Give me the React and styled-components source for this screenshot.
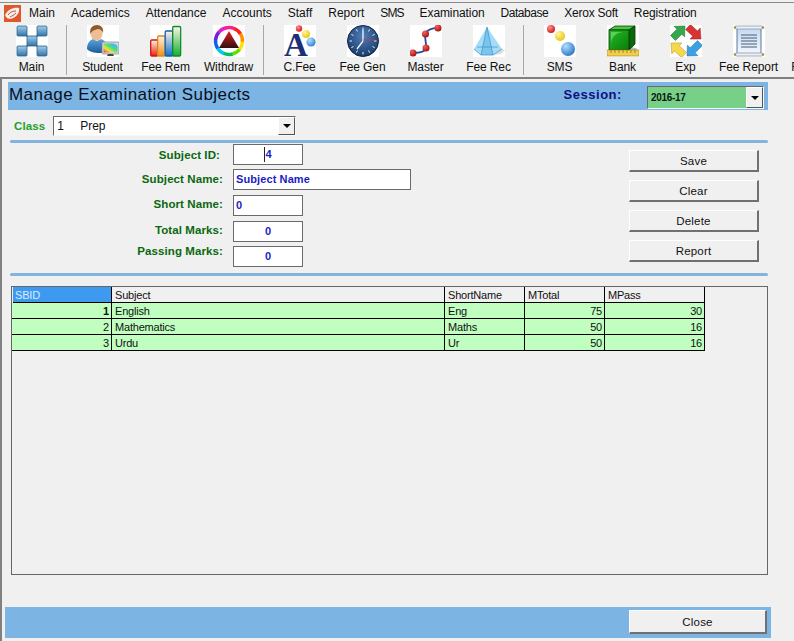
import styled, { createGlobalStyle } from 'styled-components';

const GlobalStyle = createGlobalStyle`
  html, body {
    margin: 0;
    padding: 0;
    background: #f0f0f0;
  }
  * {
    box-sizing: border-box;
  }
`;

const ball = (id, light, dark) => (
  <radialGradient id={id} cx="0.35" cy="0.3" r="0.8">
    <stop offset="0" stopColor={light} />
    <stop offset="1" stopColor={dark} />
  </radialGradient>
);

const MainIcon = () => (
  <svg viewBox="0 0 32 32" width="32" height="32">
    <defs>
      <linearGradient id="mainTile" x1="0" y1="0" x2="0" y2="1">
        <stop offset="0" stopColor="#a4cceb" />
        <stop offset="1" stopColor="#2f76a8" />
      </linearGradient>
    </defs>
    <rect width="32" height="32" fill="#fff" />
    <path d="M6 6L26 26M26 6L6 26" stroke="#2a5f88" strokeWidth="1.6" />
    {[[1, 1], [21, 1], [11, 11], [1, 21], [21, 21]].map(([x, y]) => (
      <rect key={`${x}-${y}`} x={x} y={y} width="10" height="10" rx="1" fill="url(#mainTile)" stroke="#2b6288" strokeWidth="0.8" />
    ))}
  </svg>
);

const StudentIcon = () => (
  <svg viewBox="0 0 32 32" width="32" height="32">
    <defs>
      <linearGradient id="rainbow" x1="0" y1="1" x2="1" y2="0">
        <stop offset="0" stopColor="#f03040" />
        <stop offset="0.3" stopColor="#f0e040" />
        <stop offset="0.55" stopColor="#50e070" />
        <stop offset="0.8" stopColor="#40b8f0" />
        <stop offset="1" stopColor="#e8e8ff" />
      </linearGradient>
      <linearGradient id="shirt" x1="0" y1="0" x2="0" y2="1">
        <stop offset="0" stopColor="#5aa4dc" />
        <stop offset="1" stopColor="#1c5c9c" />
      </linearGradient>
    </defs>
    <rect width="32" height="32" fill="#fff" />
    <path d="M0 24c0-6 3-9 6-10l4 2 4-2c3 1 5 3 5 6v7c-5 2-16 1-19-3z" fill="url(#shirt)" />
    <ellipse cx="9.5" cy="8.5" rx="6" ry="7" fill="#f0bc94" />
    <path d="M3.5 9C2 3 6 0 10 0s7 3 6 8c-1-3-3-4-5-4-3 1-6 1-7.500 5z" fill="#8f5a2a" />
    <rect x="15" y="17" width="17" height="12" rx="1" fill="#d4d8dc" stroke="#80868c" strokeWidth="0.7" />
    <rect x="16.500" y="18.500" width="14" height="9" fill="url(#rainbow)" />
    <path d="M21 29h5l1 2h-7z" fill="#444" />
  </svg>
);

const barFill = (id, color) => (
  <linearGradient id={id} x1="0" y1="0" x2="0" y2="1">
    <stop offset="0" stopColor="#fff4e8" />
    <stop offset="1" stopColor={color} />
  </linearGradient>
);

const FeeRemIcon = () => (
  <svg viewBox="0 0 32 32" width="32" height="32">
    <defs>
      {barFill('barRed', '#e82010')}
      {barFill('barOrange', '#f09010')}
      {barFill('barBlue', '#1070d0')}
      {barFill('barGreen', '#10b030')}
    </defs>
    <rect width="32" height="32" fill="#fff" />
    <rect x="0.700" y="15" width="7" height="16" rx="1" fill="url(#barRed)" stroke="#c81810" strokeWidth="1.300" />
    <rect x="7.700" y="11" width="7.500" height="20" rx="1" fill="url(#barOrange)" stroke="#e08818" strokeWidth="1.300" />
    <rect x="15.200" y="6" width="7.500" height="25" rx="1" fill="url(#barBlue)" stroke="#1060b0" strokeWidth="1.300" />
    <rect x="22.700" y="1.500" width="8" height="29.500" rx="1" fill="url(#barGreen)" stroke="#0c8a28" strokeWidth="1.300" />
  </svg>
);

const wheelColors = ['#ff2020', '#ff9000', '#ffe000', '#60e000', '#00c060', '#00c8e8', '#1060f0', '#7020e0', '#e020d0', '#ff2080'];

const WithdrawIcon = () => (
  <svg viewBox="0 0 32 32" width="32" height="32">
    <defs>
      <linearGradient id="triFill" x1="0" y1="0" x2="0" y2="1">
        <stop offset="0" stopColor="#e02020" />
        <stop offset="1" stopColor="#301010" />
      </linearGradient>
    </defs>
    <rect width="32" height="32" fill="#fff" />
    {wheelColors.map((color, i) => {
      const a0 = (i / 10) * Math.PI * 2 - 1.2;
      const a1 = ((i + 1.1) / 10) * Math.PI * 2 - 1.2;
      return (
        <path
          key={color}
          d={`M${16 + 13.5 * Math.cos(a0)} ${16 + 13.5 * Math.sin(a0)}A13.5 13.5 0 0 1 ${16 + 13.5 * Math.cos(a1)} ${16 + 13.5 * Math.sin(a1)}`}
          fill="none"
          stroke={color}
          strokeWidth="3.4"
        />
      );
    })}
    <path d="M16 6L26 23H6z" fill="url(#triFill)" />
  </svg>
);

const CFeeIcon = () => (
  <svg viewBox="0 0 32 32" width="32" height="32">
    <defs>
      {ball('cfRed', '#ff9090', '#d01010')}
      {ball('cfYellow', '#fff8a0', '#e8c000')}
      {ball('cfBlue', '#b0e0ff', '#2878d0')}
    </defs>
    <rect width="32" height="32" fill="#fff" />
    <text x="0" y="31" fontFamily="'Liberation Serif', serif" fontWeight="700" fontSize="33" fill="#1c2f78">A</text>
    <circle cx="15" cy="3.500" r="3.200" fill="url(#cfRed)" />
    <circle cx="22" cy="9" r="4" fill="url(#cfYellow)" />
    <circle cx="27" cy="17" r="4.600" fill="url(#cfBlue)" />
  </svg>
);

const FeeGenIcon = () => (
  <svg viewBox="0 0 32 32" width="32" height="32">
    <defs>
      <radialGradient id="clockFace" cx="0.5" cy="0.35" r="0.75">
        <stop offset="0" stopColor="#4f7fb8" />
        <stop offset="1" stopColor="#12305e" />
      </radialGradient>
    </defs>
    <rect width="32" height="32" fill="#fff" />
    <circle cx="16" cy="16" r="15.500" fill="url(#clockFace)" stroke="#0f2747" />
    {Array.from({ length: 12 }).map((_, i) => {
      const a = (i / 12) * Math.PI * 2;
      return (
        <line
          key={i}
          x1={16 + 11 * Math.cos(a)}
          y1={16 + 11 * Math.sin(a)}
          x2={16 + 13.5 * Math.cos(a)}
          y2={16 + 13.5 * Math.sin(a)}
          stroke="#e8f0f8"
          strokeWidth="1"
        />
      );
    })}
    <path d="M16 16V5M16 16L10 24" stroke="#f4f8fc" strokeWidth="1.300" />
    <path d="M16 15h12" stroke="#e03030" strokeWidth="0.800" />
  </svg>
);

const MasterIcon = () => (
  <svg viewBox="0 0 32 32" width="32" height="32">
    <defs>{ball('msRed', '#f86060', '#9c0808')}</defs>
    <rect width="32" height="32" fill="#fff" />
    <path d="M3 28C8 28 15 27 16 23C17 18 14 14 15.500 9C17 5 22 3 28 3" fill="none" stroke="#1c4fa0" strokeWidth="1.800" />
    {[[3, 28], [16, 23], [15.5, 9], [28, 3]].map(([x, y]) => (
      <circle key={x + y} cx={x} cy={y} r="3.500" fill="url(#msRed)" />
    ))}
  </svg>
);

const FeeRecIcon = () => (
  <svg viewBox="0 0 32 32" width="32" height="32">
    <rect width="32" height="32" fill="#fff" />
    <path d="M20 30l9-6 3 1-4 4z" fill="#dcdcdc" />
    <path d="M14 2L1 24l7 6h12l9-6z" fill="#a8dcf6" />
    <path d="M14 2L8 30h12z" fill="#7cc4ec" />
    <path d="M14 2L8 30M14 2L20 30M1 24l7 6h12l9-6M4 22h21" stroke="#3c9cd8" strokeWidth="0.800" fill="none" />
  </svg>
);

const SmsIcon = () => (
  <svg viewBox="0 0 32 32" width="32" height="32">
    <defs>
      {ball('smsRed', '#ff9090', '#c81010')}
      {ball('smsYellow', '#fff8a0', '#e8c000')}
      {ball('smsBlue', '#b0e0ff', '#2070c0')}
    </defs>
    <rect width="32" height="32" fill="#fff" />
    <circle cx="7" cy="4" r="4" fill="url(#smsRed)" />
    <circle cx="16" cy="11" r="5" fill="url(#smsYellow)" />
    <circle cx="24" cy="24" r="7" fill="url(#smsBlue)" />
  </svg>
);

const BankIcon = () => (
  <svg viewBox="0 0 32 32" width="32" height="32">
    <defs>
      <linearGradient id="cubeFront" x1="0" y1="0" x2="1" y2="1">
        <stop offset="0" stopColor="#30b030" />
        <stop offset="0.45" stopColor="#18a018" />
        <stop offset="1" stopColor="#0c7a0c" />
      </linearGradient>
    </defs>
    <rect width="32" height="32" fill="#fff" />
    <path d="M25 22l6 2-2 1h-8z" fill="#b8b8b8" />
    <path d="M8 1h20l-6 4H2z" fill="#48c840" stroke="#063806" strokeWidth="0.800" />
    <path d="M28 1v18l-6 6V5z" fill="#0a6a0a" stroke="#063806" strokeWidth="0.800" />
    <rect x="2" y="5" width="20" height="20" fill="url(#cubeFront)" stroke="#063806" strokeWidth="0.800" />
    <path d="M4 20C4 12 8 8 16 7H4z" fill="#70e070" opacity="0.7" />
    <rect x="0" y="25" width="32" height="6" fill="#f0cf50" stroke="#a08820" strokeWidth="0.600" />
    <path d="M4 25v3M8 25v3M12 25v3M16 25v3M20 25v3M24 25v3M28 25v3" stroke="#806810" strokeWidth="0.700" />
  </svg>
);

// arrow polygon going from tail to tip, for the four swap arrows
const arrowPoints = (x0, y0, x1, y1) => {
  const len = Math.hypot(x1 - x0, y1 - y0);
  const ux = (x1 - x0) / len;
  const uy = (y1 - y0) / len;
  const nx = -uy;
  const ny = ux;
  const bx = x1 - ux * 8;
  const by = y1 - uy * 8;
  const pts = [
    [x0 + nx * 3.5, y0 + ny * 3.5],
    [bx + nx * 3.5, by + ny * 3.5],
    [bx + nx * 7.5, by + ny * 7.5],
    [x1, y1],
    [bx - nx * 7.5, by - ny * 7.5],
    [bx - nx * 3.5, by - ny * 3.5],
    [x0 - nx * 3.5, y0 - ny * 3.5],
  ];
  return pts.map((p) => p.join(',')).join(' ');
};

const ExpIcon = () => (
  <svg viewBox="0 0 32 32" width="32" height="32">
    <rect width="32" height="32" fill="#fff" />
    <polygon points={arrowPoints(3, 13, 15, 1)} fill="#34a84c" stroke="#1c7030" strokeWidth="0.500" />
    <polygon points={arrowPoints(18, 2, 31, 14)} fill="#d83434" stroke="#902020" strokeWidth="0.500" />
    <polygon points={arrowPoints(14, 30, 1, 18)} fill="#f6d84c" stroke="#b09020" strokeWidth="0.500" />
    <polygon points={arrowPoints(30, 18, 17, 31)} fill="#3ca0e4" stroke="#2070a8" strokeWidth="0.500" />
  </svg>
);

const FeeReportIcon = () => (
  <svg viewBox="0 0 32 32" width="32" height="32">
    <defs>
      <linearGradient id="scrollBody" x1="0" y1="0" x2="0" y2="1">
        <stop offset="0" stopColor="#c4d8f0" />
        <stop offset="1" stopColor="#f4f8fc" />
      </linearGradient>
    </defs>
    <rect width="32" height="32" fill="#fff" />
    <rect x="4" y="3" width="24" height="26" fill="url(#scrollBody)" stroke="#4c6c98" strokeWidth="0.900" />
    <rect x="2" y="1" width="28" height="3" rx="1.500" fill="#eef2f8" stroke="#8898a8" strokeWidth="0.800" />
    <rect x="2" y="28" width="28" height="3" rx="1.500" fill="#eef2f8" stroke="#8898a8" strokeWidth="0.800" />
    <path d="M8 10h16M8 13h16M8 16h16M8 19h16M8 22h16" stroke="#4a5c78" strokeWidth="1" />
    <circle cx="2" cy="2.500" r="1.300" fill="#a89048" />
    <circle cx="30" cy="2.500" r="1.300" fill="#a89048" />
    <circle cx="2" cy="29.500" r="1.300" fill="#a89048" />
    <circle cx="30" cy="29.500" r="1.300" fill="#a89048" />
  </svg>
);

const AppLogo = () => (
  <svg viewBox="0 0 17 17" width="17" height="17">
    <rect width="17" height="17" fill="#e2562c" />
    <path d="M1 10C4 4 10 2 15 3c1 4-2 9-8 11-3 0-5-1-6-4z" fill="#f8efe8" />
    <path d="M4 10c2-3 5-4 8-4M6 12c2-1 4-2 6-4" fill="none" stroke="#b8503c" strokeWidth="1" />
  </svg>
);

const menuItems = [
  { label: 'Main' },
  { label: 'Academics' },
  { label: 'Attendance' },
  { label: 'Accounts' },
  { label: 'Staff' },
  { label: 'Report' },
  { label: 'SMS', tight: 0.9 },
  { label: 'Examination', tight: 0.1 },
  { label: 'Database', tight: 0.45 },
  { label: 'Xerox Soft', tight: 0.25 },
  { label: 'Registration', tight: 0.1 },
];

const toolGroups = [
  [{ label: 'Main', Icon: MainIcon }],
  [
    { label: 'Student', Icon: StudentIcon },
    { label: 'Fee Rem', Icon: FeeRemIcon },
    { label: 'Withdraw', Icon: WithdrawIcon },
  ],
  [
    { label: 'C.Fee', Icon: CFeeIcon },
    { label: 'Fee Gen', Icon: FeeGenIcon },
    { label: 'Master', Icon: MasterIcon },
    { label: 'Fee Rec', Icon: FeeRecIcon },
  ],
  [
    { label: 'SMS', Icon: SmsIcon },
    { label: 'Bank', Icon: BankIcon },
    { label: 'Exp', Icon: ExpIcon },
    { label: 'Fee Report', Icon: FeeReportIcon },
    { label: 'Fee Bal', Icon: null },
  ],
];

const subjects = [
  { id: 1, name: 'English', short: 'Eng', total: 75, pass: 30 },
  { id: 2, name: 'Mathematics', short: 'Maths', total: 50, pass: 16 },
  { id: 3, name: 'Urdu', short: 'Ur', total: 50, pass: 16 },
];

const Combo = ({ children, $green }) => (
  <ComboBox $green={$green}>
    {children}
    <ComboArrow>
      <ArrowGlyph />
    </ComboArrow>
  </ComboBox>
);

const App = () => {
  return (
    <>
      <GlobalStyle />
      <Window>
        <MenuBar>
          <LogoSlot>
            <AppLogo />
          </LogoSlot>
          {menuItems.map((item) => (
            <MenuItem key={item.label} $tight={item.tight}>{item.label}</MenuItem>
          ))}
        </MenuBar>
        <ToolBar>
          {toolGroups.map((group, index) => (
            <ToolGroup key={index}>
              {group.map(({ label, Icon }) => (
                <ToolButton key={label}>
                  <IconSlot>{Icon && <Icon />}</IconSlot>
                  <ToolLabel>{label}</ToolLabel>
                </ToolButton>
              ))}
            </ToolGroup>
          ))}
        </ToolBar>
        <Workspace>
          <Header>
            <Title>Manage Examination Subjects</Title>
            <SessionLabel>Session:</SessionLabel>
            <Combo $green>
              <SessionValue>2016-17</SessionValue>
            </Combo>
          </Header>
          <ClassRow>
            <ClassLabel>Class</ClassLabel>
            <Combo>
              <ClassCode>1</ClassCode>
              <span>Prep</span>
            </Combo>
          </ClassRow>
          <Divider $top={4} />
          <FormSection>
            <FormGrid>
              <FieldLabel $inset={3}>Subject ID:</FieldLabel>
              <Field $width={70} $align="center">
                <Caret>4</Caret>
              </Field>
              <FieldLabel $lift={1}>Subject Name:</FieldLabel>
              <Field $width={178}>Subject Name</Field>
              <FieldLabel $lift={2}>Short Name:</FieldLabel>
              <Field $width={70}>0</Field>
              <FieldLabel $lift={2}>Total Marks:</FieldLabel>
              <Field $width={70} $align="center">0</Field>
              <FieldLabel $lift={6}>Passing Marks:</FieldLabel>
              <Field $width={70} $align="center">0</Field>
            </FormGrid>
            <ButtonStack>
              {['Save', 'Clear', 'Delete', 'Report'].map((label) => (
                <ActionButton key={label}>{label}</ActionButton>
              ))}
            </ButtonStack>
          </FormSection>
          <Divider />
          <GridFrame>
            <DataGrid>
              <HeadCell $selected>SBID</HeadCell>
              <HeadCell>Subject</HeadCell>
              <HeadCell>ShortName</HeadCell>
              <HeadCell>MTotal</HeadCell>
              <HeadCell>MPass</HeadCell>
              {subjects.map((row, index) => (
                <GridRow key={row.id}>
                  <DataCell $right $bold={index === 0}>{row.id}</DataCell>
                  <DataCell>{row.name}</DataCell>
                  <DataCell>{row.short}</DataCell>
                  <DataCell $right>{row.total}</DataCell>
                  <DataCell $right>{row.pass}</DataCell>
                </GridRow>
              ))}
            </DataGrid>
          </GridFrame>
          <Footer>
            <CloseButton>Close</CloseButton>
          </Footer>
        </Workspace>
      </Window>
    </>
  );
};

export default App;

const Window = styled.div`
  width: 794px;
  height: 641px;
  overflow: hidden;
  display: flex;
  flex-direction: column;
  padding-top: 2px;
  background: #f0f0f0;
  font-family: 'Liberation Sans', Arial, sans-serif;
  color: #111;
`;

const MenuBar = styled.div`
  display: flex;
  align-items: center;
  gap: 16px;
  height: 21px;
  padding-left: 4px;
  border-top: 1px solid #8a8a8a;
  font-size: 12px;
`;

const LogoSlot = styled.div`
  display: flex;
  width: 17px;
  height: 17px;
  margin-right: -8px;
`;

const MenuItem = styled.span`
  white-space: nowrap;
  letter-spacing: ${({ $tight }) => -($tight || 0)}px;
`;

const ToolBar = styled.div`
  display: flex;
  flex: none;
  height: 56px;
  border-bottom: 2px solid #808080;
  padding-top: 2px;
`;

const ToolGroup = styled.div`
  display: flex;
  flex: none;
  height: 50px;
  padding-right: 3px;
  margin-right: 4px;
  border-right: 1px solid #a8a8a8;

  &:last-child {
    border-right: 0;
  }
`;

const ToolButton = styled.div`
  display: flex;
  flex-direction: column;
  align-items: center;
  width: 63px;
  flex: none;
`;

const IconSlot = styled.div`
  width: 32px;
  height: 32px;
  margin-bottom: 3px;
`;

const ToolLabel = styled.span`
  font-size: 12px;
  line-height: 14px;
  white-space: nowrap;
  letter-spacing: -0.1px;
`;

const Workspace = styled.div`
  flex: 1;
  min-height: 0;
  border-left: 2px solid #808080;
  padding-top: 3px;
`;

const Header = styled.div`
  display: flex;
  align-items: center;
  width: 760px;
  height: 28px;
  margin-left: 6px;
  padding: 0 4px 0 1px;
  background: #7cb4e4;

  & > div {
    width: 117px;
    height: 23px;
    margin-left: 25px;
    margin-top: 3px;
  }
`;

const Title = styled.h1`
  flex: 1;
  margin: 0 0 2px;
  font-size: 17px;
  font-weight: 400;
  letter-spacing: 0.44px;
  color: #0a0f20;
`;

const SessionLabel = styled.span`
  margin-bottom: 3px;
  font-size: 13px;
  font-weight: 700;
  letter-spacing: 0.55px;
  color: #10107c;
`;

const ComboBox = styled.div`
  display: flex;
  align-items: center;
  width: 243px;
  height: 20px;
  padding-left: 3px;
  background: ${({ $green }) => ($green ? '#78d088' : '#fff')};
  border-top: 1px solid #6a6a6a;
  border-left: 1px solid #6a6a6a;
  border-right: 1px solid #f8f8f8;
  border-bottom: 1px solid #f8f8f8;
  font-size: 12px;
  line-height: 16px;
`;

const ComboArrow = styled.div`
  display: flex;
  align-items: center;
  justify-content: center;
  width: 17px;
  height: 100%;
  margin-left: auto;
  background: #f0f0f0;
  border-top: 1px solid #fff;
  border-left: 1px solid #fff;
  border-right: 1px solid #555;
  border-bottom: 1px solid #555;
`;

const ArrowGlyph = styled.div`
  width: 0;
  height: 0;
  border-left: 4px solid transparent;
  border-right: 4px solid transparent;
  border-top: 4px solid #000;
`;

const SessionValue = styled.span`
  font-size: 10px;
  font-weight: 700;
  letter-spacing: -0.3px;
  color: #0c1a10;
`;

const ClassRow = styled.div`
  display: flex;
  align-items: center;
  gap: 8px;
  margin-top: 6px;
  padding-left: 12px;
`;

const ClassLabel = styled.span`
  margin-bottom: 1px;
  font-size: 11.5px;
  font-weight: 700;
  letter-spacing: 0.1px;
  color: #1ea02c;
`;

const ClassCode = styled.span`
  width: 23px;
`;

const Divider = styled.div`
  width: 758px;
  height: 3px;
  margin-top: ${({ $top }) => $top || 0}px;
  margin-left: 8px;
  border-radius: 2px;
  background: #82b4de;
`;

const FormSection = styled.div`
  display: flex;
  height: 130px;
`;

const FormGrid = styled.div`
  display: grid;
  grid-template-columns: 221px auto;
  grid-template-rows: 25px 26px 26px 25px 21px;
  column-gap: 10px;
  justify-content: start;
  width: 410px;
  padding-top: 1px;
`;

const FieldLabel = styled.div`
  display: flex;
  align-items: center;
  justify-content: flex-end;
  height: 21px;
  padding-right: ${({ $inset }) => $inset || 0}px;
  padding-bottom: ${({ $lift }) => ($lift || 0) * 2}px;
  font-size: 11.5px;
  font-weight: 700;
  letter-spacing: 0.1px;
  white-space: nowrap;
  color: #0a680f;
`;

const Field = styled.div`
  display: flex;
  align-items: center;
  justify-content: ${({ $align }) => ($align === 'center' ? 'center' : 'flex-start')};
  width: ${({ $width }) => $width}px;
  height: 21px;
  padding-left: ${({ $align }) => ($align === 'center' ? 0 : 2)}px;
  padding-bottom: ${({ $width }) => ($width > 100 ? 2 : 1)}px;
  background: #fff;
  border: 1px solid #6a6a6a;
  font-size: 11px;
  font-weight: 700;
  letter-spacing: 0.1px;
  color: #1c1cc4;
`;

const Caret = styled.span`
  display: inline-block;
  height: 15px;
  line-height: 15px;
  border-left: 1px solid #222;
`;

const ButtonStack = styled.div`
  display: flex;
  flex-direction: column;
  gap: 8px;
  margin-left: 217px;
  padding-top: 7px;
`;

const ActionButton = styled.button`
  width: 130px;
  height: 22px;
  padding: 0;
  background: #f0f0f0;
  border-style: solid;
  border-width: 1px 2px 2px 1px;
  border-color: #fff #707070 #707070 #fff;
  border-radius: 0;
  font-family: 'Liberation Sans', Arial, sans-serif;
  font-size: 11.5px;
  letter-spacing: 0.2px;
  color: #111;
`;

const GridFrame = styled.div`
  width: 757px;
  height: 289px;
  margin-top: 10px;
  margin-left: 9px;
  background: #f0f0f0;
  border: 1px solid #666;
`;

const DataGrid = styled.div`
  display: grid;
  grid-template-columns: 100px 333px 80px 80px 100px;
  grid-auto-rows: 16px;
  width: 693px;
  font-size: 11px;
  letter-spacing: -0.2px;
`;

const GridRow = styled.div`
  display: contents;
`;

const HeadCell = styled.div`
  display: flex;
  align-items: center;
  padding-left: ${({ $selected }) => ($selected ? 2 : 3)}px;
  margin-left: ${({ $selected }) => ($selected ? 1 : 0)}px;
  background: ${({ $selected }) => ($selected ? '#3d9af0' : '#f0f0f0')};
  color: ${({ $selected }) => ($selected ? '#d8ecff' : '#111')};
  border-right: 1px solid #000;
  border-bottom: 1px solid #000;
`;

const DataCell = styled.div`
  display: flex;
  align-items: center;
  justify-content: ${({ $right }) => ($right ? 'flex-end' : 'flex-start')};
  padding: 0 2px 0 3px;
  background: #c0ffc0;
  font-weight: ${({ $bold }) => ($bold ? 700 : 400)};
  border-right: 1px solid #000;
  border-bottom: 1px solid #000;
`;

const Footer = styled.div`
  display: flex;
  justify-content: flex-end;
  align-items: flex-start;
  width: 766px;
  height: 31px;
  margin-top: 32px;
  margin-left: 3px;
  padding: 3px 4px 0 0;
  background: #7cb4e4;
`;

const CloseButton = styled(ActionButton)`
  width: 138px;
  height: 24px;
`;
